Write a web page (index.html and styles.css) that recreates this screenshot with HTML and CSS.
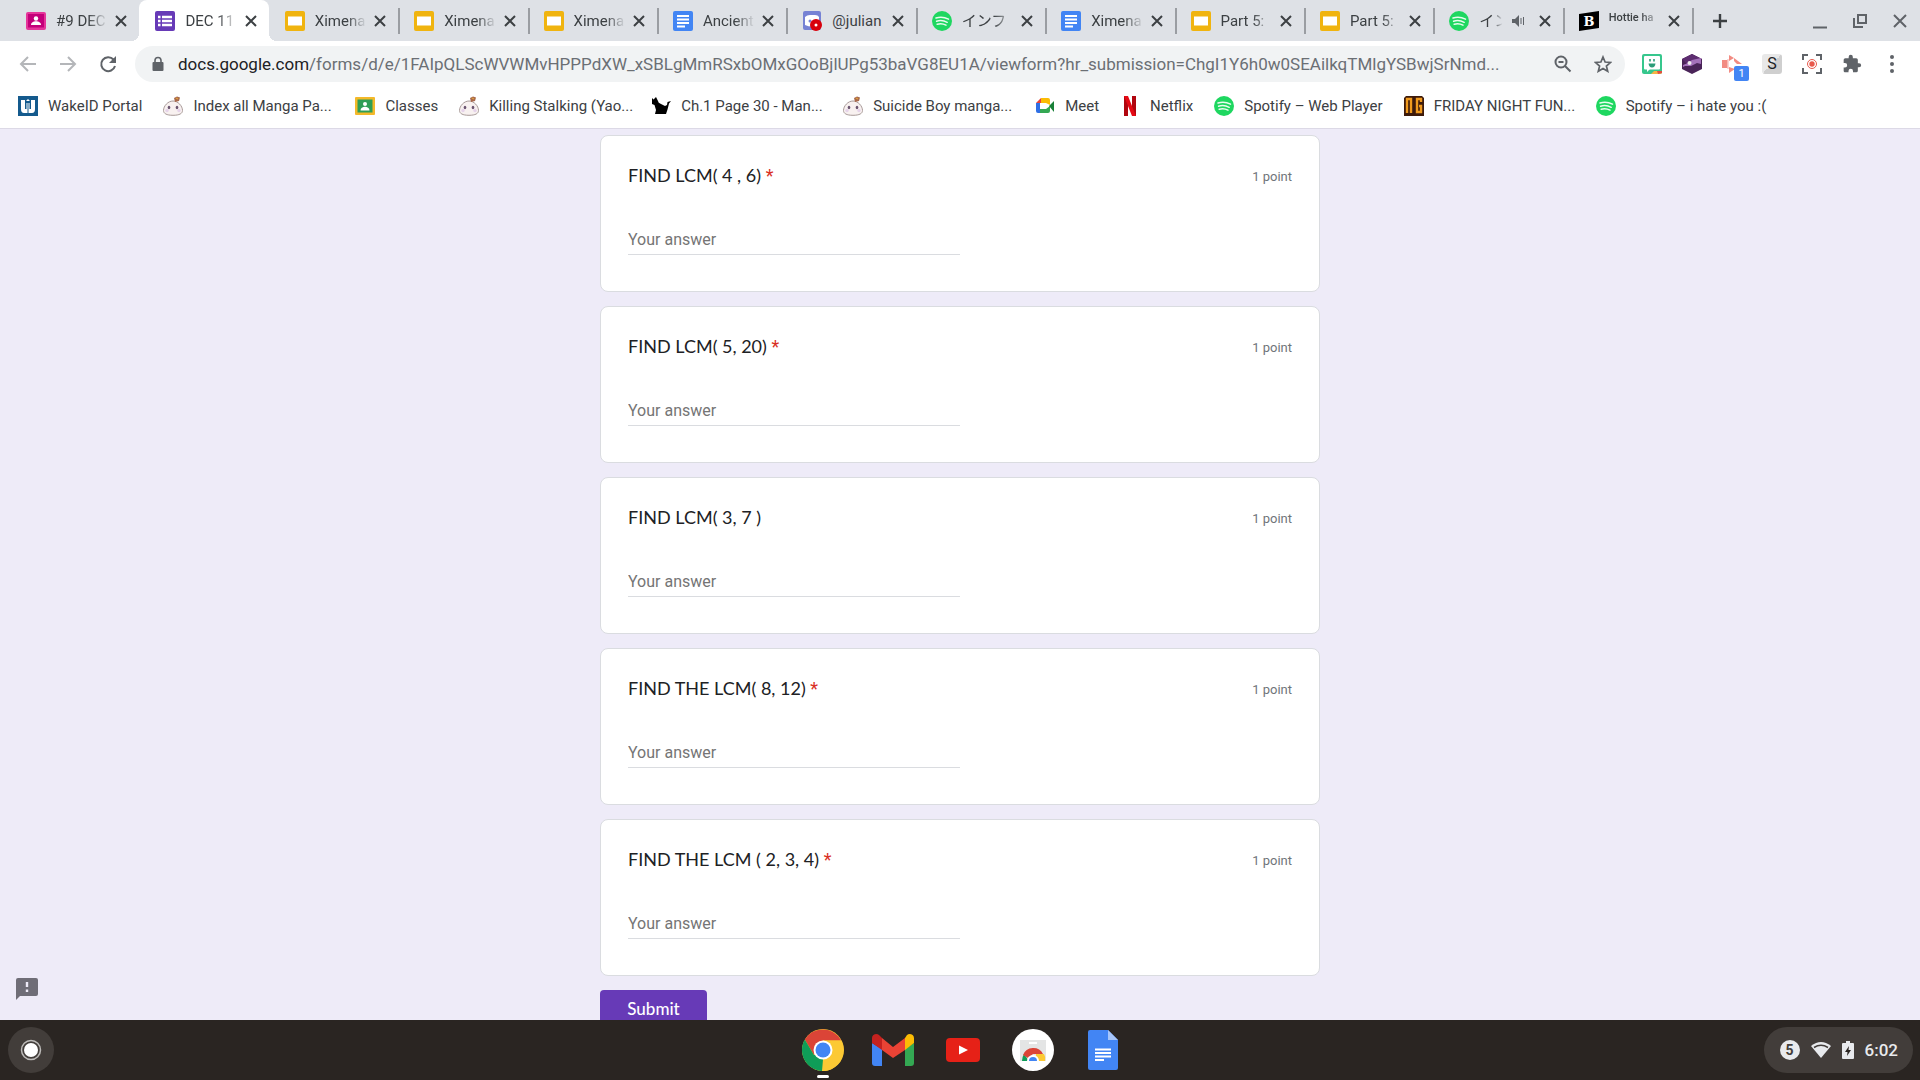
FILE: index.html
```html
<!DOCTYPE html>
<html lang="en">
<head>
    <meta charset="UTF-8">
    <title>DEC 11</title>
    <link rel="stylesheet" href="styles.css">
</head>
<body>
    <!-- shared icons -->
    <svg class="sprite" width="0" height="0">
        <symbol id="i-close" viewBox="0 0 20 20"><path d="M5 5l10 10M15 5L5 15" fill="none" stroke="#3c4043" stroke-width="2"/></symbol>
        <symbol id="i-slides" viewBox="0 0 20 20"><rect width="20" height="20" rx="2" fill="#f0b40f"/><rect x="3" y="5.500" width="14" height="9" fill="#fff"/></symbol>
        <symbol id="i-docs" viewBox="0 0 20 20"><rect width="20" height="20" rx="2" fill="#4285f4"/><path d="M4 5h12M4 8.500h12M4 12h12M4 15.500h8" stroke="#fff" stroke-width="1.800"/></symbol>
        <symbol id="i-spotify" viewBox="0 0 20 20"><circle cx="10" cy="10" r="10" fill="#1ed760"/><path d="M4 7q6.500-2 12.500 1.200M4.600 10.200q5.500-1.600 10.600 1.100M5.200 13.200q4.800-1.300 8.800 1" fill="none" stroke="#e9fbef" stroke-width="1.500" stroke-linecap="round"/></symbol>
        <symbol id="i-manga" viewBox="0 0 20 20"><path d="M10 5C5 5 .5 10 .5 14.500c0 3 3 4.800 9.500 4.800s9.500-1.800 9.500-4.800C19.500 10 15 5 10 5z" fill="#f8f1f0" stroke="#a89a98" stroke-width="1"/><path d="M12 6l-1-4 3-1.500 3 1-1 3.500z" fill="#a8694c"/><path d="M13 2l2 1" stroke="#e2a33c" stroke-width="1.300"/><ellipse cx="6" cy="11.500" rx="1.300" ry="1.700" fill="#6b5570"/><ellipse cx="14" cy="11.500" rx="1.300" ry="1.700" fill="#6b5570"/><circle cx="4" cy="14.500" r="1.700" fill="#e6d3ea"/><circle cx="16" cy="14.500" r="1.700" fill="#e6d3ea"/></symbol>
    </svg>

    <header class="browser">
        <div class="tab-strip">
            <div class="tabs">
                <div class="tab">
                    <svg class="favicon" viewBox="0 0 20 20"><rect y="1" width="20" height="18" rx="2" fill="#e5359a"/><rect x="2" y="3" width="16" height="13.500" fill="#c4007a"/><circle cx="10" cy="7.500" r="2.200" fill="#fff"/><path d="M5 14c0-5 10-5 10 0z" fill="#fff"/></svg>
                    <span class="tab-title">#9 DEC</span>
                    <button class="tab-close" aria-label="Close"><svg><use href="#i-close"/></svg></button>
                </div>
                <div class="tab active">
                    <svg class="favicon" viewBox="0 0 20 20"><rect width="20" height="20" rx="2" fill="#673ab7"/><path d="M3 6h2.500M3 10h2.500M3 14h2.500M7 6h10M7 10h10M7 14h10" stroke="#fff" stroke-width="2.400"/></svg>
                    <span class="tab-title">DEC 11</span>
                    <button class="tab-close" aria-label="Close"><svg><use href="#i-close"/></svg></button>
                </div>
                <div class="tab">
                    <svg class="favicon"><use href="#i-slides"/></svg>
                    <span class="tab-title">Ximena</span>
                    <button class="tab-close" aria-label="Close"><svg><use href="#i-close"/></svg></button>
                </div>
                <div class="tab">
                    <svg class="favicon"><use href="#i-slides"/></svg>
                    <span class="tab-title">Ximena</span>
                    <button class="tab-close" aria-label="Close"><svg><use href="#i-close"/></svg></button>
                </div>
                <div class="tab">
                    <svg class="favicon"><use href="#i-slides"/></svg>
                    <span class="tab-title">Ximena</span>
                    <button class="tab-close" aria-label="Close"><svg><use href="#i-close"/></svg></button>
                </div>
                <div class="tab">
                    <svg class="favicon"><use href="#i-docs"/></svg>
                    <span class="tab-title">Ancient</span>
                    <button class="tab-close" aria-label="Close"><svg><use href="#i-close"/></svg></button>
                </div>
                <div class="tab">
                    <svg class="favicon" viewBox="0 0 20 20"><rect x="1" width="18" height="19" rx="2" fill="#7682d4"/><path d="M3 6q2-2 5-2h5q3 0 4 2l0 8q-7 3-14 0z" fill="#fff"/><circle cx="8" cy="10" r="1.500" fill="#7682d4"/><circle cx="14" cy="14" r="6" fill="#d8000c"/><circle cx="14" cy="14" r="1.500" fill="#fff"/></svg>
                    <span class="tab-title whole">@julian</span>
                    <button class="tab-close" aria-label="Close"><svg><use href="#i-close"/></svg></button>
                </div>
                <div class="tab">
                    <svg class="favicon"><use href="#i-spotify"/></svg>
                    <span class="tab-title">インフ</span>
                    <button class="tab-close" aria-label="Close"><svg><use href="#i-close"/></svg></button>
                </div>
                <div class="tab">
                    <svg class="favicon"><use href="#i-docs"/></svg>
                    <span class="tab-title">Ximena</span>
                    <button class="tab-close" aria-label="Close"><svg><use href="#i-close"/></svg></button>
                </div>
                <div class="tab">
                    <svg class="favicon"><use href="#i-slides"/></svg>
                    <span class="tab-title">Part 5:</span>
                    <button class="tab-close" aria-label="Close"><svg><use href="#i-close"/></svg></button>
                </div>
                <div class="tab">
                    <svg class="favicon"><use href="#i-slides"/></svg>
                    <span class="tab-title">Part 5:</span>
                    <button class="tab-close" aria-label="Close"><svg><use href="#i-close"/></svg></button>
                </div>
                <div class="tab">
                    <svg class="favicon"><use href="#i-spotify"/></svg>
                    <span class="tab-title">イン</span>
                    <svg class="speaker" viewBox="0 0 14 14"><path d="M1 5h3l4-4v12L4 9H1z" fill="#5f6368"/><path d="M10 4v6M12.500 3v8" stroke="#5f6368"/></svg>
                    <button class="tab-close" aria-label="Close"><svg><use href="#i-close"/></svg></button>
                </div>
                <div class="tab">
                    <svg class="favicon" viewBox="0 0 20 20"><path d="M0 3L20 0v17L0 20z" fill="#000"/><text x="10" y="15" text-anchor="middle" class="b-letter">B</text></svg>
                    <span class="tab-title small">Hottie ha</span>
                    <button class="tab-close" aria-label="Close"><svg><use href="#i-close"/></svg></button>
                </div>
            </div>
            <button class="new-tab" aria-label="New tab"><svg width="16" height="16" viewBox="0 0 16 16"><path d="M8 1v14M1 8h14" stroke="#3c4043" stroke-width="2.400"/></svg></button>
            <div class="window-buttons">
                <button aria-label="Minimize"><svg width="16" height="16" viewBox="0 0 16 16"><path d="M1 14.500h14" stroke="#5f6368" stroke-width="2"/></svg></button>
                <button aria-label="Restore"><svg width="16" height="16" viewBox="0 0 16 16"><path d="M6 2h8v8H6zM2 5v9h9" fill="none" stroke="#5f6368" stroke-width="2"/></svg></button>
                <button aria-label="Close window"><svg width="16" height="16" viewBox="0 0 16 16"><path d="M2 2l12 12M14 2L2 14" stroke="#5f6368" stroke-width="2"/></svg></button>
            </div>
        </div>

        <div class="toolbar">
            <button class="tool" aria-label="Back"><svg width="18" height="18" viewBox="0 0 18 18"><path d="M17 9H2M9 2L2 9l7 7" fill="none" stroke="#b4b6b9" stroke-width="2"/></svg></button>
            <button class="tool" aria-label="Forward"><svg width="18" height="18" viewBox="0 0 18 18"><path d="M1 9h15M9 2l7 7-7 7" fill="none" stroke="#b4b6b9" stroke-width="2"/></svg></button>
            <button class="tool" aria-label="Reload"><svg width="18" height="18" viewBox="0 0 18 18"><path d="M14.500 4.500A7 7 0 1 0 16 11" fill="none" stroke="#5f6368" stroke-width="2"/><path d="M17 1v7h-7z" fill="#5f6368"/></svg></button>
            <div class="omnibox">
                <svg class="lock" width="12" height="16" viewBox="0 0 12 16"><path d="M3 7V4.500a3 3 0 0 1 6 0V7" fill="none" stroke="#5f6368" stroke-width="1.600"/><rect x="0.500" y="6" width="11" height="9" rx="1" fill="#5f6368"/></svg>
                <div class="url"><b>docs.google.com</b>/forms/d/e/1FAIpQLScWVWMvHPPPdXW_xSBLgMmRSxbOMxGOoBjlUPg53baVG8EU1A/viewform?hr_submission=ChgI1Y6h0w0SEAilkqTMlgYSBwjSrNmd...</div>
                <button class="tool" aria-label="Zoom"><svg width="18" height="18" viewBox="0 0 18 18"><circle cx="7" cy="7" r="5.500" fill="none" stroke="#5f6368" stroke-width="2"/><path d="M11 11l5.500 5.500M4.500 7h5" stroke="#5f6368" stroke-width="2"/></svg></button>
                <button class="tool" aria-label="Bookmark"><svg width="18" height="18" viewBox="0 0 18 18"><path d="M9 2l2.100 5 5.400.5-4.100 3.500 1.300 5.300L9 13.500l-4.700 2.800L5.600 11 1.500 7.500 6.900 7z" fill="none" stroke="#5f6368" stroke-width="1.700"/></svg></button>
            </div>
            <button class="tool" aria-label="Bitmoji"><svg width="20" height="20" viewBox="0 0 20 20"><rect width="20" height="20" rx="2" fill="#36c78d"/><rect x="2" y="2" width="16" height="13.500" rx="1" fill="#fff"/><path d="M5 14v4l4-4z" fill="#fff"/><path d="M8 5v2.500M12 5v2.500" stroke="#2b9d78" stroke-width="1.600"/><path d="M6.500 9.500h7q-.5 4-3.500 4t-3.500-4z" fill="#2b9d78"/><path d="M9 20l3-3h8v1a2 2 0 0 1-2 2z" fill="#f6b545"/><path d="M15 17h5v2l-4 1z" fill="#e24d42"/></svg></button>
            <button class="tool" aria-label="Hexagon extension"><svg width="20" height="20" viewBox="0 0 20 20"><path d="M10 0l10 5v10l-10 5L0 15V5z" fill="#4a2458"/><path d="M10 0l10 5-9 5H5L0 5z" fill="#5d2d70"/><path d="M10 6l9-2v6l-4-1-6 3H3l-2 1v-2l5-2z" fill="#a471ba"/><circle cx="7.500" cy="9" r="2" fill="#eee"/></svg></button>
            <button class="tool" aria-label="Downloads extension"><svg width="20" height="20" viewBox="0 0 20 20"><path d="M0 6h6v8H0zM7 1l5 3-5 3zM12 4l8 6h-5l-3-3zM7 13l6 2-6 4z" fill="#f28b82"/><path d="M6 5v10" stroke="#fbc7c3" stroke-width="1.500"/></svg><span class="badge">1</span></button>
            <button class="tool" aria-label="S extension"><span class="s-icon">S</span></button>
            <button class="tool" aria-label="Screen recorder"><svg width="20" height="20" viewBox="0 0 20 20"><path d="M1 6V1h5M14 1h5v5M19 14v5h-5M6 19H1v-5" fill="none" stroke="#5f6368" stroke-width="2"/><circle cx="10" cy="10" r="4.500" fill="none" stroke="#e8594c" stroke-width="1"/><circle cx="10" cy="10" r="2.700" fill="#e8594c"/></svg></button>
            <button class="tool" aria-label="Extensions"><svg width="20" height="20" viewBox="0 0 24 24"><path d="M20.500 11H19V7a2 2 0 0 0-2-2h-4V3.500a2.500 2.500 0 0 0-5 0V5H4a2 2 0 0 0-2 2v3.800h1.500a2.700 2.700 0 0 1 0 5.400H2V20c0 1.100.9 2 2 2h3.800v-1.500a2.700 2.700 0 0 1 5.400 0V22H17a2 2 0 0 0 2-2v-4h1.500a2.500 2.500 0 0 0 0-5z" fill="#5f6368"/></svg></button>
            <button class="tool" aria-label="Menu"><svg width="4" height="18" viewBox="0 0 4 18"><circle cx="2" cy="2" r="2" fill="#5f6368"/><circle cx="2" cy="9" r="2" fill="#5f6368"/><circle cx="2" cy="16" r="2" fill="#5f6368"/></svg></button>
        </div>

        <nav class="bookmarks">
            <a href="#"><svg viewBox="0 0 20 20"><rect width="20" height="20" fill="#145a8d"/><path d="M3 4h4v9h1.500V7h3v6H13V4h4v9q0 4-3 4H6q-3 0-3-4z" fill="#fff"/><path d="M10 7v10" stroke="#145a8d"/><path d="M8 5l2-2 2 2z" fill="#fff"/></svg><span>WakeID Portal</span></a>
            <a href="#"><svg><use href="#i-manga"/></svg><span class="clip">Index all Manga Pa...</span></a>
            <a href="#"><svg viewBox="0 0 20 20"><rect y="1" width="20" height="18" rx="1" fill="#f4b92a"/><rect x="2.500" y="3.500" width="15" height="13" fill="#2f9e55"/><circle cx="10" cy="8" r="2" fill="#fff"/><path d="M5.500 14.500c0-5 9-5 9 0z" fill="#fff"/></svg><span>Classes</span></a>
            <a href="#"><svg><use href="#i-manga"/></svg><span class="clip">Killing Stalking (Yao...</span></a>
            <a href="#"><svg viewBox="0 0 20 20"><path d="M1 2l1.500 1.500L5 1l2 4q0 2 3 3l4 2 2-1 .5-3L20 5l-2 2.500-1.500 6L15 18H4l1-4-1.500-5L1 8z" fill="#000"/></svg><span class="clip">Ch.1 Page 30 - Man...</span></a>
            <a href="#"><svg><use href="#i-manga"/></svg><span class="clip">Suicide Boy manga...</span></a>
            <a href="#"><svg viewBox="0 0 20 20"><path d="M1 7l5-5v5z" fill="#ea4335"/><path d="M6 2h7a2 2 0 0 1 2 2v5l-4-2H6z" fill="#fbbc04"/><path d="M1 7h4v10H3a2 2 0 0 1-2-2z" fill="#2f6fe4"/><path d="M5 13h6l4-3v5a2 2 0 0 1-2 2H5z" fill="#34a853"/><path d="M14 10l5-5v11z" fill="#188038"/></svg><span>Meet</span></a>
            <a href="#"><svg viewBox="0 0 20 20"><path d="M4 0h4v20H4zM12 0h4v20h-4z" fill="#b1060f"/><path d="M4 0h4l8 20h-4z" fill="#e50914"/></svg><span>Netflix</span></a>
            <a href="#"><svg><use href="#i-spotify"/></svg><span>Spotify – Web Player</span></a>
            <a href="#"><svg viewBox="0 0 20 20"><path d="M0 2l2-2h16l2 2v18H0z" fill="#3d1a0a"/><path d="M3 17V3h4v14M17 6V3h-4v13h4v-6h-2" fill="none" stroke="#f09a1e" stroke-width="2.400"/></svg><span class="clip">FRIDAY NIGHT FUN...</span></a>
            <a href="#"><svg><use href="#i-spotify"/></svg><span>Spotify – i hate you :(</span></a>
        </nav>
    </header>

    <main>
        <form>
            <div class="card">
                <div class="question">
                    <label for="q1">FIND LCM( 4 , 6) <span class="required">*</span></label>
                    <span class="points">1 point</span>
                </div>
                <input type="text" id="q1" placeholder="Your answer">
            </div>
            <div class="card">
                <div class="question">
                    <label for="q2">FIND LCM( 5, 20) <span class="required">*</span></label>
                    <span class="points">1 point</span>
                </div>
                <input type="text" id="q2" placeholder="Your answer">
            </div>
            <div class="card">
                <div class="question">
                    <label for="q3">FIND LCM( 3, 7 )</label>
                    <span class="points">1 point</span>
                </div>
                <input type="text" id="q3" placeholder="Your answer">
            </div>
            <div class="card">
                <div class="question">
                    <label for="q4">FIND THE LCM( 8, 12) <span class="required">*</span></label>
                    <span class="points">1 point</span>
                </div>
                <input type="text" id="q4" placeholder="Your answer">
            </div>
            <div class="card">
                <div class="question">
                    <label for="q5">FIND THE LCM ( 2, 3, 4) <span class="required">*</span></label>
                    <span class="points">1 point</span>
                </div>
                <input type="text" id="q5" placeholder="Your answer">
            </div>
            <button type="submit" class="submit">Submit</button>
        </form>
        <button class="report" aria-label="Report a problem"><svg width="24" height="24" viewBox="0 0 24 24"><path d="M3 1h18a2 2 0 0 1 2 2v14a2 2 0 0 1-2 2H5l-4 4V3a2 2 0 0 1 2-2z" fill="#6f6d77"/><path d="M12 5v5M12 12.500v2.500" stroke="#eeebf8" stroke-width="2.400"/></svg></button>
    </main>

    <footer class="shelf">
        <button class="launcher" aria-label="Launcher"><svg width="22" height="22" viewBox="0 0 22 22"><circle cx="11" cy="11" r="9.500" fill="none" stroke="#bdbbb9" stroke-width="1.500"/><circle cx="11" cy="11" r="7" fill="#fff"/></svg></button>
        <div class="apps">
            <button class="running" aria-label="Chrome"><svg viewBox="0 0 42 42"><circle cx="21" cy="21" r="21" fill="#fcc934"/><path d="M2.800 10.500A21 21 0 0 1 39.200 11.500H21L12 26z" fill="#db4437"/><path d="M2.800 10.500A21 21 0 0 0 20 42L30 26 12 26z" fill="#0f9d58"/><path d="M39.200 11.500H21v19L20 42A21 21 0 0 0 39.200 11.500z" fill="#fcc934"/><circle cx="21" cy="21" r="9.500" fill="#fff"/><circle cx="21" cy="21" r="7.500" fill="#4285f4"/></svg></button>
            <button aria-label="Gmail"><svg viewBox="0 0 42 42"><path d="M0 14v20a3 3 0 0 0 3 3h7V20z" fill="#4285f4"/><path d="M42 14v20a3 3 0 0 1-3 3h-6V20z" fill="#34a853"/><path d="M10 9l11 9 12-9v12L21 29 10 21z" fill="#ea4335"/><path d="M0 14V9c0-4 5-5 7-3l3 3v12z" fill="#c5221f"/><path d="M42 14V9c0-4-5-5-7-3l-2 3v12z" fill="#fbbc04"/></svg></button>
            <button aria-label="YouTube"><svg viewBox="0 0 42 42"><rect x="4" y="9" width="34" height="24" rx="4" fill="#e62117"/><path d="M17 16.500v9l9-4.500z" fill="#fff"/></svg></button>
            <button aria-label="Web Store"><svg viewBox="0 0 42 42"><circle cx="21" cy="21" r="21" fill="#fff"/><path d="M8 11h26v21H8z" fill="#e4e5e5"/><path d="M17 14h8" stroke="#fff" stroke-width="2"/><path d="M10 32a11 12 0 0 1 2-7l5 7z" fill="#0f9d58"/><path d="M11 26a11 11 0 0 1 20-1H21l-5 4z" fill="#db4437"/><path d="M24 25h8q2 3 1 7h-9z" fill="#fcc934"/><path d="M15 32a6 6 0 0 1 12 0z" fill="#fff"/><path d="M17 32a4 4 0 0 1 8 0z" fill="#4285f4"/></svg></button>
            <button aria-label="Docs"><svg viewBox="0 0 42 42"><path d="M8 1h18l10 10v28a2 2 0 0 1-2 2H8a2 2 0 0 1-2-2V3a2 2 0 0 1 2-2z" fill="#4285f4"/><path d="M26 1l10 10H26z" fill="#a6c5fa"/><path d="M13 20.500h16M13 24h16M13 27.500h16M13 31h9" stroke="#fff" stroke-width="1.800"/></svg></button>
        </div>
        <button class="status">
            <span class="count">5</span>
            <svg width="20" height="16" viewBox="0 0 20 16"><path d="M0 4q10-8 20 0L10 16z" fill="#e8eaed"/><path d="M3 5.500q7-4.500 14 0" fill="none" stroke="#423d3a" stroke-width="1.500"/></svg>
            <svg width="12" height="18" viewBox="0 0 12 18"><path d="M4 0h4v2h3a1 1 0 0 1 1 1v14a1 1 0 0 1-1 1H1a1 1 0 0 1-1-1V3a1 1 0 0 1 1-1h3z" fill="#e8eaed"/><path d="M7 5l-4 6h2.500L5 15l4-6H6.500z" fill="#2a2522"/></svg>
            <span class="clock">6:02</span>
        </button>
    </footer>
</body>
</html>
```

FILE: styles.css
```css
* {
    box-sizing: border-box;
}

html, body {
    height: 100%;
    margin: 0;
    padding: 0;
    font-family: Roboto, "Noto Sans CJK JP", sans-serif;
    color: #3c4043;
}

body {
    display: flex;
    flex-direction: column;
    overflow: hidden;
}

button {
    border: none;
    background: none;
    padding: 0;
    margin: 0;
    font-family: inherit;
    color: inherit;
    cursor: pointer;
    display: flex;
    align-items: center;
    justify-content: center;
}

svg {
    display: block;
    flex: none;
}

.sprite {
    position: absolute;
}

/* tab strip */

.tab-strip {
    display: flex;
    height: 41px;
    background-color: #dee1e6;
    padding-left: 10px;
}

.tabs {
    display: flex;
    flex: 1;
    min-width: 0;
}

.tab {
    flex: 1 1 0;
    min-width: 0;
    display: flex;
    align-items: center;
    padding: 0 8px 0 16px;
    position: relative;
}

.tab::after {
    content: "";
    position: absolute;
    right: -2px;
    top: 8px;
    width: 2px;
    height: 26px;
    background-color: #9a9da2;
}

.tab:first-child::after {
    display: none;
}

.tab.active {
    background-color: #fff;
    border-radius: 8px 8px 0 0;
}

.tab.active::before, .tab.active::after {
    content: "";
    position: absolute;
    top: auto;
    bottom: 0;
    width: 8px;
    height: 8px;
}

.tab.active::before {
    left: -8px;
    background: radial-gradient(circle at 0 0, transparent 8px, #fff 8px);
}

.tab.active::after {
    right: -8px;
    background: radial-gradient(circle at 100% 0, transparent 8px, #fff 8px);
}

.favicon {
    width: 20px;
    height: 20px;
    margin-right: 10px;
}

.b-letter {
    fill: #fff;
    font: bold 13px "DejaVu Serif", serif;
}

.tab-title {
    flex: 1;
    min-width: 0;
    font-size: 15px;
    line-height: 20px;
    white-space: nowrap;
    overflow: hidden;
    -webkit-mask-image: linear-gradient(to right, #000 60%, transparent 98%);
    mask-image: linear-gradient(to right, #000 60%, transparent 98%);
}

.tab-title.whole {
    -webkit-mask-image: none;
    mask-image: none;
}

.tab-title.small {
    font-size: 11px;
    font-weight: 500;
    padding-bottom: 6px;
}

.speaker {
    width: 14px;
    height: 14px;
    margin: 0 8px;
}

.tab-close, .tab-close svg {
    width: 20px;
    height: 20px;
}

.tab-close {
    margin-left: 2px;
}

.new-tab {
    width: 56px;
}

.window-buttons {
    display: flex;
    margin-left: 52px;
}

.window-buttons button {
    width: 40px;
}

/* toolbar */

.toolbar {
    display: flex;
    align-items: center;
    height: 46px;
    padding: 0 8px;
    background-color: #fff;
}

.tool {
    width: 40px;
    height: 36px;
    flex: none;
    position: relative;
}

.omnibox {
    flex: 1;
    min-width: 0;
    height: 36px;
    margin: 0 7px;
    padding: 0 2px 0 17px;
    border-radius: 18px;
    background-color: #f1f3f4;
    display: flex;
    align-items: center;
}

.url {
    flex: 1;
    min-width: 0;
    margin-left: 14px;
    font-size: 17px;
    line-height: 24px;
    color: #6b6f74;
    white-space: nowrap;
    overflow: hidden;
}

.url b {
    font-weight: 400;
    color: #202124;
}

.badge {
    position: absolute;
    right: 3px;
    bottom: 1px;
    width: 15px;
    height: 15px;
    border-radius: 2px;
    background-color: #4285f4;
    color: #fff;
    font-size: 11px;
    line-height: 15px;
    text-align: center;
}

.s-icon {
    width: 20px;
    height: 20px;
    border-radius: 3px;
    background: linear-gradient(135deg, #e8e8e8 50%, #cfcfcf 50%);
    color: #202124;
    font-size: 16px;
    line-height: 20px;
}

/* bookmarks */

.bookmarks {
    display: flex;
    align-items: center;
    gap: 21px;
    height: 42px;
    padding: 0 18px 4px;
    background-color: #fff;
    border-bottom: 1px solid #dcd9e6;
}

.bookmarks a {
    display: flex;
    align-items: center;
    gap: 10px;
    color: #3c4043;
    font-size: 15px;
    line-height: 20px;
    text-decoration: none;
    white-space: nowrap;
}

.bookmarks svg {
    width: 20px;
    height: 20px;
}

.bookmarks .clip {
    width: 141px;
}

/* form */

main {
    flex: 1;
    min-height: 0;
    overflow: hidden;
    position: relative;
    background-color: #eeebf8;
    padding-top: 6px;
}

form {
    width: 720px;
    max-width: 100%;
    margin: 0 auto;
    display: flex;
    flex-direction: column;
    gap: 14px;
}

.card {
    background-color: #fff;
    border: 1px solid #dadce0;
    border-radius: 8px;
    padding: 26px 27px 36px;
}

.question {
    display: flex;
    justify-content: space-between;
    align-items: center;
    height: 26px;
    line-height: 26px;
    margin-bottom: 37px;
}

.question label {
    font-family: Lato, Roboto, sans-serif;
    font-size: 18px;
    color: #202124;
}

.question .required {
    font-family: Roboto, sans-serif;
    color: #d93025;
}

.points {
    padding-top: 4px;
    font-size: 13px;
    line-height: 22px;
    color: #70757a;
}

.card input {
    display: block;
    width: 50%;
    height: 30px;
    padding: 0 0 1px;
    border: none;
    border-bottom: 1px solid #dadce0;
    outline: none;
    background: none;
    font-family: Roboto, sans-serif;
    font-size: 16px;
    line-height: 24px;
    color: #202124;
}

.card input::placeholder {
    color: #757575;
}

.submit {
    align-self: flex-start;
    width: 107px;
    height: 36px;
    border-radius: 4px;
    background-color: #673ab7;
    color: #fff;
    font-family: Lato, Roboto, sans-serif;
    font-size: 17px;
    font-weight: 500;
}

.report {
    position: absolute;
    left: 15px;
    bottom: 19px;
}

/* shelf */

.shelf {
    display: grid;
    grid-template-columns: 1fr auto 1fr;
    align-items: center;
    height: 60px;
    padding: 0 7px 0 8px;
    background-color: #2a2522;
}

.launcher {
    width: 46px;
    height: 46px;
    border-radius: 50%;
    background-color: #423d3a;
}

.apps {
    display: flex;
    gap: 28px;
    padding-left: 4px;
}

.apps button {
    width: 42px;
    height: 60px;
    position: relative;
}

.apps svg {
    width: 42px;
    height: 42px;
}

.apps .running::after {
    content: "";
    position: absolute;
    left: 15px;
    bottom: 2px;
    width: 12px;
    height: 3px;
    border-radius: 2px;
    background-color: #fff;
}

.status {
    justify-self: end;
    gap: 11px;
    height: 46px;
    padding: 0 15px 0 16px;
    border-radius: 23px;
    background-color: #423d3a;
    color: #e8eaed;
}

.count {
    width: 20px;
    height: 20px;
    border-radius: 50%;
    background-color: #e8eaed;
    color: #423d3a;
    font-size: 14px;
    font-weight: 700;
    line-height: 20px;
}

.clock {
    font-size: 17px;
    font-weight: 500;
}
```
